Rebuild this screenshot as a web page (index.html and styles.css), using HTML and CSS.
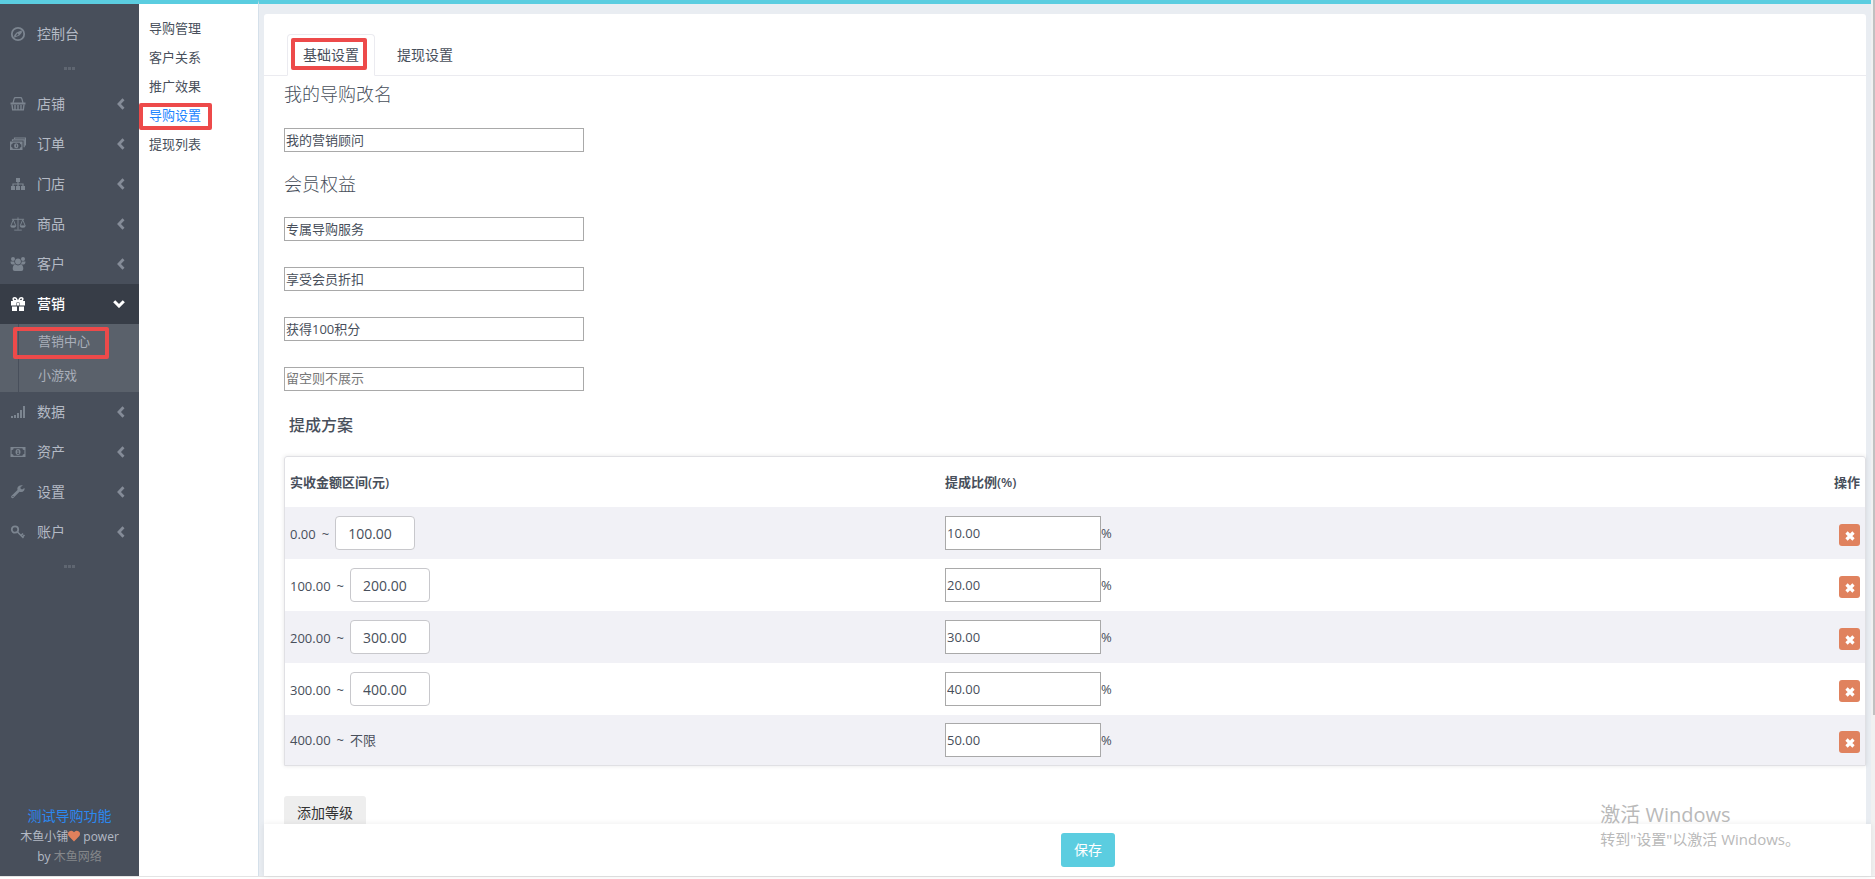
FILE: index.html
```html
<!DOCTYPE html>
<html lang="zh-CN">
<head>
<meta charset="utf-8">
<title>导购设置</title>
<link rel="stylesheet" href="styles.css">
</head>
<body>
<svg class="defs" aria-hidden="true">
  <symbol id="left" viewBox="0 0 8 12"><path d="M6.500 1.300 2 6l4.500 4.700" fill="none" stroke="currentColor" stroke-width="2.800"/></symbol>
  <symbol id="cross" viewBox="0 0 10 10"><path d="M1.500 1.500l7 7M8.500 1.500l-7 7" fill="none" stroke="currentColor" stroke-width="3.200"/></symbol>
</svg>
<div class="shell">
  <aside class="sidebar">
    <nav class="menu">
      <a class="item" href="#"><svg class="icon" viewBox="0 0 16 16"><circle cx="8" cy="8" r="6.200" fill="none" stroke="currentColor" stroke-width="1.800"/><path fill-rule="evenodd" fill="currentColor" d="M11.800 4.200v2.600L9.400 9.400 4.200 11.800V9.200L6.600 6.600zM7.300 7.300l-1.500 2.900 2.900-1.500z"/></svg><span>控制台</span></a>
      <div class="divider"><i></i><i></i><i></i></div>
      <a class="item" href="#"><svg class="icon" viewBox="0 0 16 16"><path fill="none" stroke="currentColor" stroke-width="1.200" d="M3 7 4.200 2.500Q4.400 1.600 5.500 1.600h5q1.100 0 1.300.9L13 7"/><path fill="currentColor" d="M.5 6.500h15v2h-15z"/><path fill="none" stroke="currentColor" stroke-width="1.400" d="M2 8.500l.7 5.400h10.600L14 8.500M5 9v5M8 9v5M11 9v5"/></svg><span>店铺</span><svg class="arrow"><use href="#left"/></svg></a>
      <a class="item" href="#"><svg class="icon" viewBox="0 0 16 16"><path fill="none" stroke="currentColor" stroke-width="1.200" d="M2.500 5V3.800h11.700v7.500M4.500 3V2h11v7.500"/><path fill="currentColor" fill-rule="evenodd" d="M0 5.500h12.500V14H0zM2.800 6.700q0 1.700-1.600 1.700v2.700q1.600 0 1.600 1.700h6.900q0-1.700 1.600-1.700V8.400q-1.600 0-1.600-1.700zM6.250 7.300a2.200 2.500 0 1 1 0 5 2.200 2.500 0 1 1 0-5zM6 8.500v2.500h.8V8.500z"/></svg><span>订单</span><svg class="arrow"><use href="#left"/></svg></a>
      <a class="item" href="#"><svg class="icon" viewBox="0 0 16 16"><path fill="currentColor" d="M6 2h4v4H6zM1 10h4v4H1zM6 10h4v4H6zM11 10h4v4h-4z"/><path fill="none" stroke="currentColor" stroke-width="1.200" d="M8 6v4M3 10V8h10v2"/></svg><span>门店</span><svg class="arrow"><use href="#left"/></svg></a>
      <a class="item" href="#"><svg class="icon" viewBox="0 0 17 16"><path fill="none" stroke="currentColor" d="M8.500 1v13M4.500 14.500h8M2 3h13M3.500 3.500.8 10h5.400zM13.500 3.500 10.800 10h5.400z"/><path fill="currentColor" d="M.3 10h6.200Q5.800 12 3.400 12T.3 10zM10.400 10h6.200q-.7 2-3.100 2t-3.100-2z"/></svg><span>商品</span><svg class="arrow"><use href="#left"/></svg></a>
      <a class="item" href="#"><svg class="icon" viewBox="0 0 16 16"><g fill="currentColor"><circle cx="3" cy="3" r="2"/><circle cx="13" cy="3" r="2"/><circle cx="8" cy="5.500" r="2.900"/><path d="M.5 5.500h3.800q0 2 1.200 3H2.500Q.5 8.500.5 5.500zM15.500 5.500h-3.800q0 2-1.200 3h3q2 0 2-3zM5.200 8.600q2.800 1.600 5.600 0Q13.300 9 13.300 13q0 2-2 2H4.700q-2 0-2-2 0-4 2.500-4.400z"/></g></svg><span>客户</span><svg class="arrow"><use href="#left"/></svg></a>
      <a class="item active" href="#"><svg class="icon" viewBox="0 0 16 16"><path fill="currentColor" d="M1 5h14v4.500H9.500V6.500h-3v3H1zM2 10.500h5V15H2zM9 10.500h5V15H9zM7 7h2v2.500H7z"/><path fill="none" stroke="currentColor" stroke-width="1.600" d="M7.300 4.700Q6.300 1.800 4.700 1.800T3.200 3.300q0 1.400 1.600 1.400zM8.700 4.700q1-2.900 2.600-2.900t1.500 1.500q0 1.400-1.600 1.400z"/></svg><span>营销</span><svg class="arrow down" viewBox="0 0 12 8"><path d="M1.200 1.200 6 6l4.800-4.800" fill="none" stroke="currentColor" stroke-width="3"/></svg></a>
      <div class="submenu">
        <a href="#">营销中心<span class="mark mark-center"></span></a>
        <a href="#">小游戏</a>
      </div>
      <a class="item" href="#"><svg class="icon" viewBox="0 0 16 16"><path fill="currentColor" d="M1 12h2v2H1zM4 11h2v3H4zM7 9h2v5H7zM10 6h2v8h-2zM13 2h2v12h-2z"/></svg><span>数据</span><svg class="arrow"><use href="#left"/></svg></a>
      <a class="item" href="#"><svg class="icon" viewBox="0 0 16 16"><path fill="currentColor" fill-rule="evenodd" d="M.5 3h15v10H.5zM3.600 4.200q0 1.900-2 1.900v3.800q2 0 2 1.900h8.800q0-1.900 2-1.900V6.100q-2 0-2-1.900zM8 5a2.500 3 0 1 1 0 6 2.500 3 0 1 1 0-6zM7.200 6.200v1h.4v2h-.6v.8h2.200v-.8h-.6v-3z"/></svg><span>资产</span><svg class="arrow"><use href="#left"/></svg></a>
      <a class="item" href="#"><svg class="icon" viewBox="0 0 16 16"><path fill="currentColor" fill-rule="evenodd" d="M14.500 4 12 5.500 10.500 4.500V3L13 1.500Q9.500.5 7.800 3 7 4.500 7.500 6L1.300 12q-.6 1 .2 1.800t1.800.2l6.200-6.200q3 .9 4.600-1.300.8-1.300.4-2.500zM2.500 12h1v1h-1z"/></svg><span>设置</span><svg class="arrow"><use href="#left"/></svg></a>
      <a class="item" href="#"><svg class="icon" viewBox="0 0 16 16"><circle cx="5" cy="5.500" r="3.200" fill="none" stroke="currentColor" stroke-width="1.800"/><path fill="none" stroke="currentColor" stroke-width="1.600" d="M7 7.500l6.500 6.500M13 9.500l-2 2M14.500 11l-2 2"/></svg><span>账户</span><svg class="arrow"><use href="#left"/></svg></a>
      <div class="divider"><i></i><i></i><i></i></div>
    </nav>
    <div class="credits">
      <a class="shop" href="#">测试导购功能</a>
      <p>木鱼小铺<svg class="heart" viewBox="0 0 12 12"><path fill="currentColor" d="M6 11.500.9 6.300Q-.6 4.500.4 2.300 1.500.5 3.500.7 5 .9 6 2.300 7 .9 8.500.7q2-.2 3.100 1.600 1 2.200-.5 4z"/></svg> power<br>by <a class="maker" href="#">木鱼网络</a></p>
    </div>
  </aside>
  <nav class="subnav">
    <a href="#">导购管理</a>
    <a href="#">客户关系</a>
    <a href="#">推广效果</a>
    <a class="current" href="#">导购设置<span class="mark mark-nav"></span></a>
    <a href="#">提现列表</a>
  </nav>
  <main class="main">
    <div class="scroller">
      <form class="card" id="settings">
        <div class="tabs">
          <button class="tab selected" type="button">基础设置<span class="mark mark-tab"></span></button>
          <button class="tab" type="button">提现设置</button>
        </div>
        <div class="body">
          <h3><label for="alias">我的导购改名</label></h3>
          <input class="line" id="alias" type="text" value="我的营销顾问">
          <h3>会员权益</h3>
          <div class="stack">
            <input class="line" type="text" aria-label="会员权益一" value="专属导购服务">
            <input class="line" type="text" aria-label="会员权益二" value="享受会员折扣">
            <input class="line" type="text" aria-label="会员权益三" value="获得100积分">
            <input class="line" type="text" aria-label="会员权益四" placeholder="留空则不展示">
          </div>
          <h4>提成方案</h4>
          <table class="plan">
            <thead><tr><th class="range">实收金额区间(元)</th><th>提成比例(%)</th><th class="ops">操作</th></tr></thead>
            <tbody>
              <tr><td>0.00<span class="tilde">~</span><input class="limit" type="text" aria-label="区间上限" value="100.00"></td><td><input class="rate" type="text" aria-label="提成比例" value="10.00">%</td><td class="ops"><button class="del" type="button" aria-label="删除"><svg><use href="#cross"/></svg></button></td></tr>
              <tr><td>100.00<span class="tilde">~</span><input class="limit" type="text" aria-label="区间上限" value="200.00"></td><td><input class="rate" type="text" aria-label="提成比例" value="20.00">%</td><td class="ops"><button class="del" type="button" aria-label="删除"><svg><use href="#cross"/></svg></button></td></tr>
              <tr><td>200.00<span class="tilde">~</span><input class="limit" type="text" aria-label="区间上限" value="300.00"></td><td><input class="rate" type="text" aria-label="提成比例" value="30.00">%</td><td class="ops"><button class="del" type="button" aria-label="删除"><svg><use href="#cross"/></svg></button></td></tr>
              <tr><td>300.00<span class="tilde">~</span><input class="limit" type="text" aria-label="区间上限" value="400.00"></td><td><input class="rate" type="text" aria-label="提成比例" value="40.00">%</td><td class="ops"><button class="del" type="button" aria-label="删除"><svg><use href="#cross"/></svg></button></td></tr>
              <tr class="last"><td>400.00<span class="tilde">~</span>不限</td><td><input class="rate" type="text" aria-label="提成比例" value="50.00">%</td><td class="ops"><button class="del" type="button" aria-label="删除"><svg><use href="#cross"/></svg></button></td></tr>
            </tbody>
          </table>
          <button class="add" type="button">添加等级</button>
        </div>
      </form>
    </div>
    <footer class="actions"><button class="save" type="submit" form="settings">保存</button></footer>
  </main>
  <div class="track"><div class="thumb"></div></div>
</div>
<div class="watermark"><p class="wm-title">激活 Windows</p><p>转到"设置"以激活 Windows。</p></div>
</body>
</html>
```
FILE: styles.css
```css
* { box-sizing: border-box; }
body {
  margin: 0;
  height: 100vh;
  overflow: hidden;
  background: #fff;
  color: #484f5b;
  font: 13px/20px "Open Sans", "Noto Sans CJK SC", sans-serif;
}
a { color: inherit; text-decoration: none; }
p { margin: 0; }
input, button { font: inherit; color: inherit; }
.defs { position: absolute; width: 0; height: 0; }

.shell {
  display: flex;
  height: calc(100vh - 2px);
  border-bottom: 1px solid #e4e4e4;
}

/* Sidebar */
.sidebar {
  display: flex;
  flex-direction: column;
  justify-content: space-between;
  width: 139px;
  border-top: 4px solid #5bcde0;
  background: #484f5b;
  color: #b4bac5;
}
.menu { padding-top: 10px; }
.item {
  display: flex;
  align-items: center;
  height: 40px;
  padding: 0 14px 0 10px;
  font-size: 14px;
}
.icon { width: 16px; height: 16px; margin-right: 11px; color: #7c8590; }
.arrow { width: 8px; height: 12px; margin-left: auto; color: #858c98; }
.item.active { background: #373d47; color: #fff; font-weight: 500; }
.item.active .icon, .item.active .arrow { color: #fff; }
.arrow.down { width: 12px; height: 8px; }
.divider { display: flex; justify-content: center; align-items: center; gap: 1px; height: 28px; margin-bottom: 2px; }
.divider i { width: 3px; height: 3px; background: #5f6671; }
.submenu { position: relative; background: #5a616b; }
.submenu::before {
  content: "";
  position: absolute;
  top: 0;
  bottom: 0;
  left: 18px;
  border-left: 1px solid #484f5b;
}
.submenu a { display: block; position: relative; height: 34px; padding-left: 38px; line-height: 34px; color: #a9afba; }
.credits { padding: 0 12px 9px; text-align: center; font-size: 12px; }
.credits .shop { display: block; margin-bottom: 1px; font-size: 14px; color: #2b88f0; }
.credits .maker { color: #85888b; }
.heart { width: 12px; height: 12px; vertical-align: -1px; color: #e0805c; }

/* Section navigation */
.subnav {
  width: 120px;
  padding-top: 10px;
  border-top: 4px solid #5bcde0;
  border-right: 1px solid #d5e0ea;
}
.subnav a { display: block; position: relative; height: 29px; padding-left: 10px; line-height: 29px; }
.subnav .current { color: #1c84ff; }

/* Highlight frames */
.mark { position: absolute; border: 4px solid #ed4a4a; border-radius: 2px; pointer-events: none; }
.mark-center { top: 3px; left: 13px; width: 96px; height: 32px; }
.mark-nav { top: 2px; left: 0; width: 73px; height: 27px; }
.mark-tab { top: 3px; left: 3px; width: 76px; height: 32px; }

/* Content */
.main {
  display: flex;
  flex-direction: column;
  flex: 1;
  min-width: 0;
  border-top: 4px solid #5bcde0;
  background: #e9edf2;
}
.scroller { flex: 1; min-height: 0; overflow: hidden; padding: 10px 5px 0; }
.card { min-height: 100%; border-radius: 3px 3px 0 0; background: #fff; }
.tabs { display: flex; align-items: flex-end; gap: 6px; padding: 20px 23px 0; border-bottom: 1px solid #ebebf0; }
.tab {
  position: relative;
  height: 42px;
  margin-bottom: -1px;
  padding: 0 15px;
  border: 1px solid transparent;
  border-radius: 4px 4px 0 0;
  background: none;
  font-size: 14px;
}
.tab.selected { border-color: #ebebf0 #ebebf0 #fff; background: #fff; }
.body { padding-left: 20px; }
h3 { margin: 0; padding: 8px 0 24px; font-size: 18px; line-height: 20px; font-weight: 300; }
.line + h3 { padding-top: 22px; padding-bottom: 23px; }
.line {
  display: block;
  width: 300px;
  height: 24px;
  padding: 0 1px 2px;
  border: 1px solid #a9a9a9;
  border-radius: 0;
  background: #fff;
}
.line::placeholder { color: #777; opacity: 1; }
.stack { display: grid; gap: 26px; }
h4 { margin: 0; padding: 24px 5px 21px; font-size: 16px; line-height: 20px; font-weight: 500; }

.plan {
  width: 100%;
  border-collapse: separate;
  border-spacing: 0;
  border: 1px solid #e0e0e4;
  border-radius: 3px 3px 0 0;
  box-shadow: 0 0 4px rgba(0, 0, 0, 0.100);
}
.plan th { height: 50px; padding: 0 5px; text-align: left; font-weight: 600; }
.plan td { height: 52px; padding: 0 5px; }
.plan .last td { height: 50px; }
.plan tbody tr:nth-child(odd) { background: #f1f1f6; }
.plan .range { width: 655px; }
.plan .ops { width: 60px; text-align: right; }
.tilde { margin: 0 6px; }
.limit, .rate { height: 34px; background: #fff; vertical-align: baseline; }
.limit { width: 80px; padding: 0 12px; border: 1px solid #c8c8cc; border-radius: 4px; font-size: 14px; }
.rate { width: 156px; padding: 0 1px; border: 1px solid #a9a9a9; border-radius: 0; }
.del {
  display: inline-grid;
  place-items: center;
  width: 21px;
  height: 22px;
  margin-top: 4px;
  padding: 2px 0 0;
  border: 0;
  border-radius: 3px;
  background: #e0825e;
  color: #fff;
  vertical-align: middle;
}
.del svg { width: 10px; height: 10px; }
.add { height: 34px; margin-top: 30px; padding: 0 13px; border: 0; border-radius: 3px; background: #eee; font-size: 14px; color: #333; }

.actions {
  display: flex;
  position: relative;
  justify-content: center;
  align-items: center;
  height: 52px;
  margin-left: 5px;
  background: #fff;
  box-shadow: 0 0 6px rgba(0, 0, 0, 0.080);
}
.save { width: 54px; height: 34px; margin-right: -41px; padding: 0; border: 0; border-radius: 3px; background: #5bcde0; font-size: 14px; color: #fff; }

/* Scrollbar */
.track { width: 4px; padding-left: 2px; background: #f1f1f1; }
.thumb { height: 715px; background: #c1c1c1; }

.watermark { position: absolute; right: 75px; bottom: 29px; color: #b9b9b9; font-size: 15px; line-height: 22px; pointer-events: none; }
.wm-title { font-size: 20px; line-height: 26px; }
```
